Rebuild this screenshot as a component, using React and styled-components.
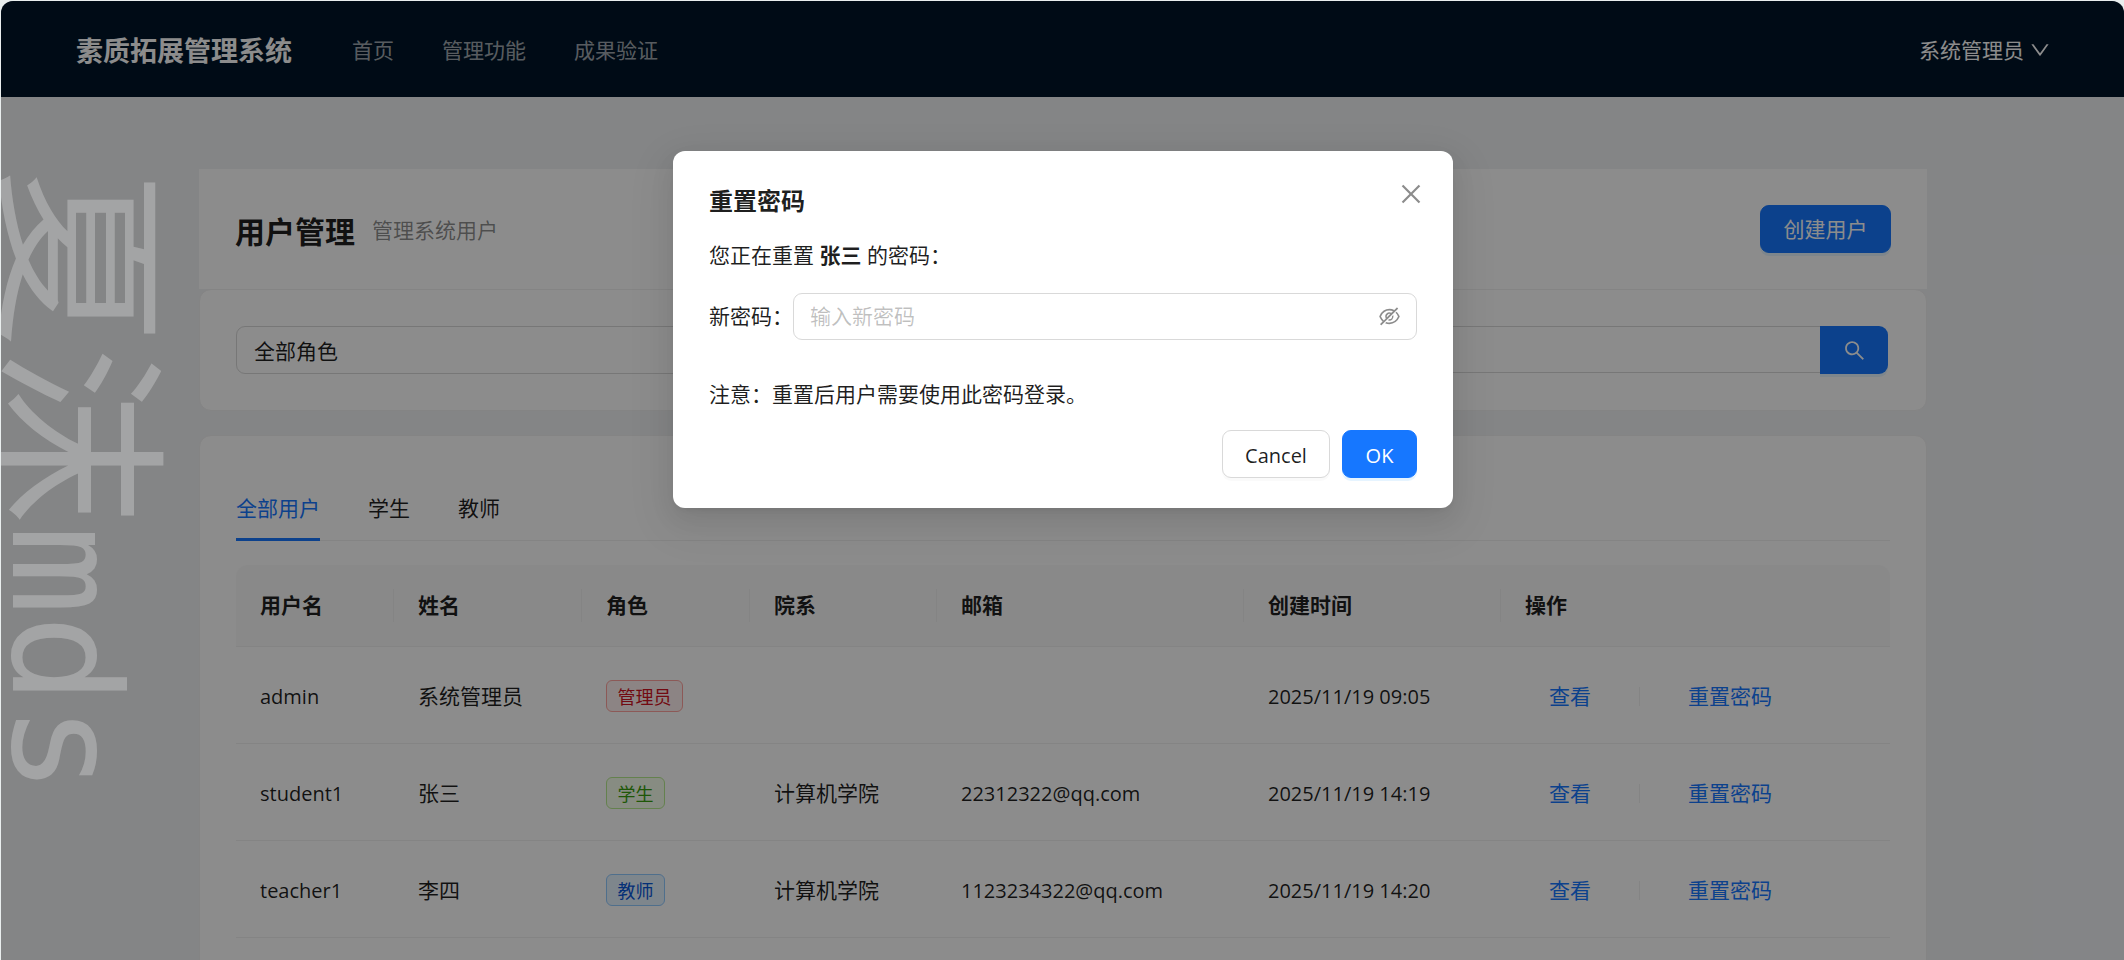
import React from "react";
import styled, { createGlobalStyle } from "styled-components";

const Global = createGlobalStyle`
  * { box-sizing: border-box; }
  body {
    margin: 0;
    font-family: "Open Sans", "Noto Sans CJK SC", sans-serif;
    font-size: 21px;
    line-height: 33px;
    color: rgba(0, 0, 0, 0.88);
    overflow: hidden;
  }
  button, input { font: inherit; }
`;

const Frame = styled.div`
  position: relative;
  width: 2124px;
  height: 960px;
  padding: 1px 0 0 1px;
  background: #e9eeee;
  overflow: hidden;
`;

const Page = styled.div`
  position: relative;
  height: 959px;
  background: #f0f2f5;
  border-radius: 12px 12px 0 0;
  overflow: hidden;
`;

const Header = styled.header`
  display: flex;
  align-items: center;
  height: 96px;
  padding: 2px 74px 0 75px;
  background: #001529;
`;

const Brand = styled.div`
  margin-right: 36px;
  font-size: 27px;
  font-weight: 700;
  color: #fff;
`;

const Menu = styled.nav`
  display: flex;
  flex: 1;
`;

const MenuItem = styled.a`
  padding: 0 24px;
  color: rgba(255, 255, 255, 0.65);
`;

const UserMenu = styled.div`
  display: flex;
  align-items: center;
  gap: 6px;
  color: #fff;
`;

const Main = styled.main`
  width: 1728px;
  margin: 72px 0 0 198px;
`;

const PageHeader = styled.section`
  display: flex;
  align-items: center;
  height: 120px;
  padding: 0 36px;
  background: #fff;
`;

const Title = styled.h1`
  margin: 4px 17px 0 0;
  font-size: 30px;
  font-weight: 700;
  line-height: 45px;
`;

const SubTitle = styled.span`
  flex: 1;
  margin-top: 2px;
  color: rgba(0, 0, 0, 0.45);
`;

const Button = styled.button`
  height: 48px;
  padding: ${(p) => (p.$latin ? "2px 22px 0" : "1px 22px 0")};
  font-size: ${(p) => (p.$latin ? "20px" : "21px")};
  line-height: 33px;
  border-radius: 9px;
  border: 1px solid ${(p) => (p.$primary ? "#1677ff" : "#d9d9d9")};
  background: ${(p) => (p.$primary ? "#1677ff" : "#fff")};
  color: ${(p) => (p.$primary ? "#fff" : "rgba(0, 0, 0, 0.88)")};
  box-shadow: 0 3px 0 ${(p) => (p.$primary ? "rgba(5, 145, 255, 0.1)" : "rgba(0, 0, 0, 0.02)")};
  width: ${(p) => p.$width}px;
`;

const Card = styled.section`
  background: #fff;
  border: 1px solid #f0f0f0;
  border-radius: 12px;
`;

const FilterCard = styled(Card)`
  display: flex;
  gap: 24px;
  height: 122px;
  padding: 36px 38px 0 36px;
`;

const Select = styled.div`
  width: 600px;
  height: 48px;
  padding: 8px 17px;
  border: 1px solid #d9d9d9;
  border-radius: 9px;
`;

const Search = styled.div`
  display: flex;
  flex: 1;
`;

const SearchField = styled.div`
  flex: 1;
  height: 47px;
  border: 1px solid #d9d9d9;
  border-right: 0;
  border-radius: 9px 0 0 9px;
`;

const SearchButton = styled.button`
  display: grid;
  place-items: center;
  width: 68px;
  height: 48px;
  padding: 0;
  border: 0;
  border-radius: 0 9px 9px 0;
  background: #1677ff;
  color: #fff;
  box-shadow: 0 3px 0 rgba(5, 145, 255, 0.1);
`;

const TableCard = styled(Card)`
  height: 620px;
  margin-top: 24px;
  padding: 36px 36px 0;
`;

const Tabs = styled.div`
  display: flex;
  gap: 48px;
  height: 69px;
  margin-bottom: 24px;
  border-bottom: 1px solid #f0f0f0;
`;

const Tab = styled.div`
  height: 69px;
  padding-top: 20px;
  color: ${(p) => (p.$active ? "#1677ff" : "inherit")};
  border-bottom: 3px solid ${(p) => (p.$active ? "#1677ff" : "transparent")};
`;

const Row = styled.div`
  display: grid;
  grid-template-columns: 158px 188px 168px 187px 307px 257px 389px;
  align-items: center;
  height: 97px;
  border-bottom: 1px solid #f0f0f0;
`;

const HeadRow = styled(Row)`
  height: 82px;
  background: #fafafa;
  border-radius: 12px 12px 0 0;
`;

const HeadCell = styled.div`
  height: 33px;
  padding-left: 24px;
  border-right: 1px solid #f0f0f0;
  font-weight: 700;
  &:last-child { border-right: 0; }
`;

const Cell = styled.div`
  padding: 2px 0 0 24px;
  white-space: nowrap;
`;

const Latin = styled.span`
  font-size: 20px;
  letter-spacing: ${(p) => p.$spacing || 0}px;
`;

const tagColors = {
  red: ["#fff1f0", "#ffa39e", "#cf1322"],
  green: ["#f6ffed", "#b7eb8f", "#389e0d"],
  blue: ["#e6f4ff", "#91caff", "#0958d9"],
};

const Tag = styled.span`
  display: block;
  width: fit-content;
  height: 32px;
  padding: 1px 10.5px 0;
  font-size: 18px;
  line-height: 30px;
  border-radius: 6px;
  background: ${(p) => tagColors[p.$color][0]};
  border: 1px solid ${(p) => tagColors[p.$color][1]};
  color: ${(p) => tagColors[p.$color][2]};
`;

const Actions = styled(Cell)`
  display: flex;
  align-items: center;
  padding-left: 48px;
`;

const Link = styled.a`
  color: #1677ff;
`;

const Divider = styled.i`
  width: 1px;
  height: 19px;
  margin: 0 48px;
  background: rgba(5, 5, 5, 0.06);
`;

const Mask = styled.div`
  position: absolute;
  inset: 0;
  background: rgba(0, 0, 0, 0.45);
`;

const Modal = styled.div`
  position: absolute;
  left: 672px;
  top: 150px;
  width: 780px;
  height: 357px;
  padding: 32px 36px 30px;
  background: #fff;
  border-radius: 12px;
  box-shadow: 0 9px 24px 0 rgba(0, 0, 0, 0.08), 0 4px 9px -6px rgba(0, 0, 0, 0.12),
    0 14px 42px 12px rgba(0, 0, 0, 0.05);
`;

const ModalHead = styled.div`
  display: flex;
  justify-content: space-between;
  height: 56px;
`;

const ModalTitle = styled.h2`
  margin: 0;
  font-size: 24px;
  font-weight: 700;
  line-height: 36px;
`;

const Close = styled.button`
  width: 24px;
  height: 24px;
  margin: -1px -6px 0 0;
  padding: 0;
  border: 0;
  background: none;
  color: rgba(0, 0, 0, 0.45);
`;

const Line = styled.p`
  margin: 0;
`;

const FormRow = styled.label`
  display: flex;
  align-items: center;
  margin: 21px 0 38px;
`;

const PasswordBox = styled.span`
  display: flex;
  align-items: center;
  justify-content: space-between;
  flex: 1;
  height: 47px;
  padding: 0 16px;
  border: 1px solid #d9d9d9;
  border-radius: 9px;
  color: rgba(0, 0, 0, 0.45);
`;

const Placeholder = styled.span`
  color: rgba(0, 0, 0, 0.25);
`;

const Footer = styled.div`
  display: flex;
  justify-content: flex-end;
  gap: 12px;
  margin-top: 19px;
`;

const Watermark = styled.div`
  position: absolute;
  left: 0;
  top: 168px;
  width: 178px;
  line-height: 178px;
  writing-mode: vertical-rl;
  text-orientation: sideways;
  white-space: nowrap;
  font-family: "Noto Sans CJK SC", sans-serif;
  font-size: 178px;
  color: rgba(255, 255, 255, 0.26);
`;

const WatermarkLatin = styled.span`
  font-family: "DejaVu Sans Mono", monospace;
  font-size: 149px;
`;

const Svg = styled.svg`
  display: block;
  fill: currentColor;
`;

const Icon = ({ size = 21, d }) => (
  <Svg width={size} height={size} viewBox="64 64 896 896">
    {d.map((p) => (
      <path key={p} d={p} />
    ))}
  </Svg>
);

const icons = {
  down: [
    "M884 256h-75c-5.1 0-9.9 2.5-12.9 6.6L512 654.2 227.9 262.6c-3-4.1-7.8-6.6-12.9-6.6h-75c-6.5 0-10.3 7.4-6.5 12.7l352.6 486.1c12.8 17.6 39 17.6 51.7 0l352.6-486.1c3.9-5.3.1-12.7-6.4-12.7z",
  ],
  search: [
    "M909.6 854.5L649.9 594.8C690.2 542.7 712 479 712 412c0-80.2-31.3-155.4-87.9-212.1-56.6-56.7-132-87.9-212.1-87.9s-155.5 31.3-212.1 87.9C143.2 256.5 112 331.8 112 412c0 80.1 31.3 155.5 87.9 212.1C256.5 680.8 331.8 712 412 712c67 0 130.6-21.8 182.7-62l259.7 259.6a8.2 8.2 0 0011.6 0l43.6-43.5a8.2 8.2 0 000-11.6zM570.4 570.4C528 612.7 471.8 636 412 636s-116-23.3-158.4-65.6C211.3 528 188 471.8 188 412s23.3-116.1 65.6-158.4C296 211.3 352.2 188 412 188s116.1 23.2 158.4 65.6S636 352.2 636 412s-23.3 116.1-65.6 158.4z",
  ],
  close: [
    "M799.86 166.31c.02 0 .04.02.08.06l57.69 57.7c.04.03.05.05.06.08a.12.12 0 010 .06c0 .03-.02.05-.06.09L569.93 512l287.7 287.7c.04.04.05.06.06.09a.12.12 0 010 .07c0 .02-.02.04-.06.08l-57.7 57.69c-.03.04-.05.05-.07.06a.12.12 0 01-.07 0c-.03 0-.05-.02-.09-.06L512 569.93l-287.7 287.7c-.04.04-.06.05-.09.06a.12.12 0 01-.07 0c-.02 0-.04-.02-.08-.06l-57.69-57.7c-.04-.03-.05-.05-.06-.07a.12.12 0 010-.07c0-.03.02-.05.06-.09L454.07 512l-287.7-287.7c-.04-.04-.05-.06-.06-.09a.12.12 0 010-.07c0-.02.02-.04.06-.08l57.7-57.69c.03-.04.05-.05.07-.06a.12.12 0 01.07 0c.03 0 .05.02.09.06L512 454.07l287.7-287.7c.04-.04.06-.05.09-.06a.12.12 0 01.07 0z",
  ],
  eyeOff: [
    "M942.2 486.2Q889.47 375.11 816.7 305l-50.88 50.88C807.31 395.53 843.45 447.4 874.7 512 791.5 684.2 673.4 766 512 766q-72.67 0-133.87-22.38L323 798.75Q408 838 512 838q288.3 0 430.2-300.3a60.29 60.29 0 000-51.5zm-63.57-320.64L836 122.88a8 8 0 00-11.32 0L715.31 232.2Q624.86 186 512 186q-288.3 0-430.2 300.3a60.3 60.3 0 000 51.5q56.69 119.4 136.5 191.41L112.48 835a8 8 0 000 11.31L155.17 889a8 8 0 0011.31 0l712.15-712.12a8 8 0 000-11.32zM149.3 512C232.6 339.8 350.7 258 512 258c54.54 0 104.13 9.36 149.12 28.39l-70.3 70.3a176 176 0 00-238.13 238.13l-83.42 83.42C223.1 637.49 183.3 582.28 149.3 512zm246.7 0a112.11 112.11 0 01146.2-106.69L401.31 546.2A112 112 0 01396 512z",
    "M508 624c-3.46 0-6.87-.16-10.25-.47l-52.82 52.82a176.09 176.09 0 00227.42-227.42l-52.82 52.82c.31 3.38.47 6.79.47 10.25a111.94 111.94 0 01-112 112z",
  ],
};

const columns = ["用户名", "姓名", "角色", "院系", "邮箱", "创建时间", "操作"];

const users = [
  { login: "admin", name: "系统管理员", role: "管理员", color: "red", dept: "", email: "", created: "2025/11/19 09:05" },
  { login: "student1", name: "张三", role: "学生", color: "green", dept: "计算机学院", email: "22312322@qq.com", created: "2025/11/19 14:19" },
  { login: "teacher1", name: "李四", role: "教师", color: "blue", dept: "计算机学院", email: "1123234322@qq.com", created: "2025/11/19 14:20" },
];

export default function App() {
  return (
    <Frame>
      <Global />
      <Page>
        <Header>
          <Brand>素质拓展管理系统</Brand>
          <Menu>
            <MenuItem>首页</MenuItem>
            <MenuItem>管理功能</MenuItem>
            <MenuItem>成果验证</MenuItem>
          </Menu>
          <UserMenu>
            系统管理员
            <Icon d={icons.down} size={20} />
          </UserMenu>
        </Header>
        <Main>
          <PageHeader>
            <Title>用户管理</Title>
            <SubTitle>管理系统用户</SubTitle>
            <Button $primary $width={131}>创建用户</Button>
          </PageHeader>
          <FilterCard>
            <Select>全部角色</Select>
            <Search>
              <SearchField />
              <SearchButton>
                <Icon d={icons.search} />
              </SearchButton>
            </Search>
          </FilterCard>
          <TableCard>
            <Tabs>
              <Tab $active>全部用户</Tab>
              <Tab>学生</Tab>
              <Tab>教师</Tab>
            </Tabs>
            <HeadRow>
              {columns.map((c) => (
                <HeadCell key={c}>{c}</HeadCell>
              ))}
            </HeadRow>
            {users.map((u) => (
              <Row key={u.login}>
                <Cell><Latin>{u.login}</Latin></Cell>
                <Cell>{u.name}</Cell>
                <Cell><Tag $color={u.color}>{u.role}</Tag></Cell>
                <Cell>{u.dept}</Cell>
                <Cell><Latin>{u.email}</Latin></Cell>
                <Cell><Latin>{u.created}</Latin></Cell>
                <Actions>
                  <Link>查看</Link>
                  <Divider />
                  <Link>重置密码</Link>
                </Actions>
              </Row>
            ))}
          </TableCard>
        </Main>
        <Mask />
        <Modal>
          <ModalHead>
            <ModalTitle>重置密码</ModalTitle>
            <Close><Icon d={icons.close} size={24} /></Close>
          </ModalHead>
          <Line>您正在重置 <b>张三</b> 的密码：</Line>
          <FormRow>
            新密码：
            <PasswordBox>
              <Placeholder>输入新密码</Placeholder>
              <Icon d={icons.eyeOff} />
            </PasswordBox>
          </FormRow>
          <Line>注意：重置后用户需要使用此密码登录。</Line>
          <Footer>
            <Button $latin $width={108}>Cancel</Button>
            <Button $latin $primary $width={75}>OK</Button>
          </Footer>
        </Modal>
        <Watermark>
          夏沫<WatermarkLatin>mds</WatermarkLatin>
        </Watermark>
      </Page>
    </Frame>
  );
}
